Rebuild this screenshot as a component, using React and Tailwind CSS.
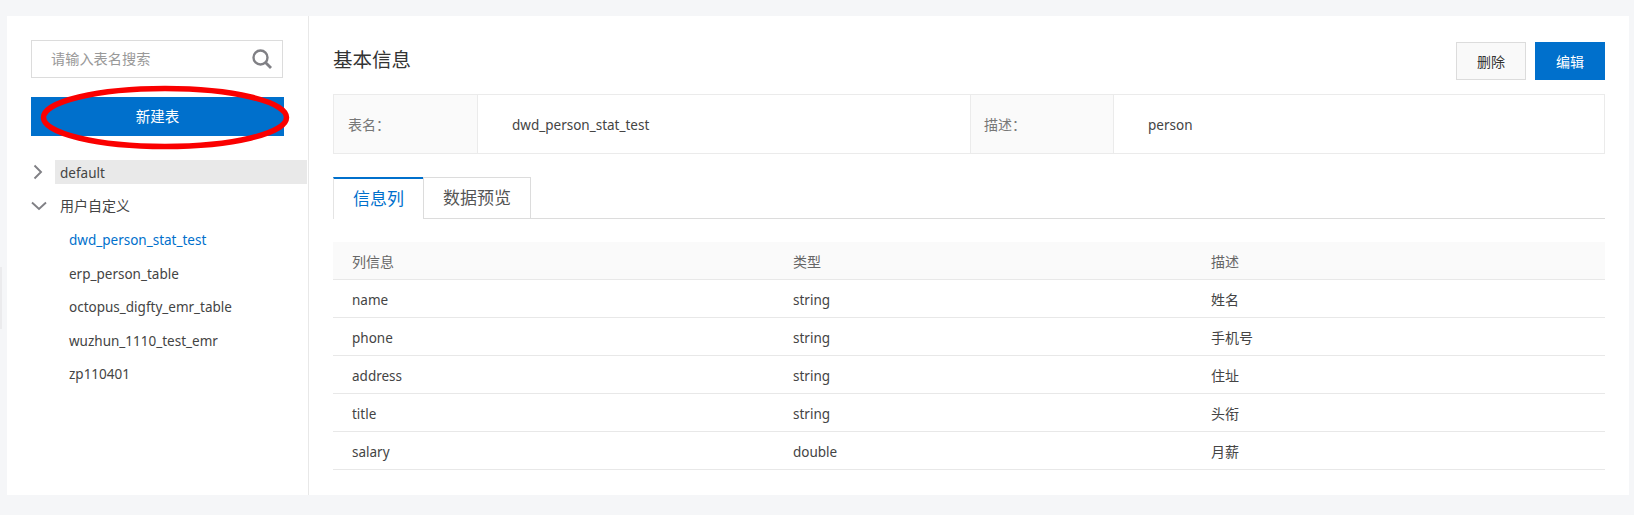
import React from 'react';

const tables = ['dwd_person_stat_test', 'erp_person_table', 'octopus_digfty_emr_table', 'wuzhun_1110_test_emr', 'zp110401'];

const columns = [
  ['name', 'string', '姓名'],
  ['phone', 'string', '手机号'],
  ['address', 'string', '住址'],
  ['title', 'string', '头衔'],
  ['salary', 'double', '月薪'],
];

function Chevron({ open }) {
  return (
    <svg width="16" height="16" viewBox="0 0 16 16" fill="none" stroke="#808085" strokeWidth="1.9" className="shrink-0">
      {open ? <path d="M1 4.5 L8 11 L15 4.5" /> : <path d="M4.5 1.5 L11 8 L4.5 14.5" />}
    </svg>
  );
}

export default function App() {
  return (
    <div className="relative w-[1634px] h-[515px] overflow-hidden bg-[#f5f6f8] pt-4 pl-[7px] pr-[5px] pb-5 font-['Noto_Sans','Noto_Sans_CJK_SC',sans-serif] text-[14px] text-[#444]">
      {/* 左边缘的灰条 */}
      <div className="absolute left-0 top-[267px] w-[2px] h-[62px] bg-[#ebebed]" />

      <div className="flex h-full bg-white">
        {/* 左侧表列表 */}
        <div className="w-[302px] shrink-0 border-r border-[#e8e8e8] pt-6 pl-6">
          <div className="flex items-center justify-between w-[252px] h-[38px] border border-[#dcdcdc] pl-[19px] pr-[10px]">
            <span className="text-[#999] text-[14.2px]">请输入表名搜索</span>
            <svg width="20" height="20" viewBox="0 0 20 20" fill="none" stroke="#808085" strokeWidth="2.4">
              <circle cx="8.5" cy="8.5" r="7" />
              <path d="M13.5 13.5 L19 19" strokeWidth="2.8" />
            </svg>
          </div>

          <div className="relative mt-[19px] w-[253px] h-[39px] bg-[#0070cc] flex items-center justify-center text-white text-[14.5px]">
            新建表
            <svg width="252" height="68" viewBox="0 0 252 68" fill="none" className="absolute left-[9px] top-[-13px]">
              <ellipse cx="125" cy="33.5" rx="121.5" ry="29" stroke="#fa0000" strokeWidth="5.5" />
            </svg>
          </div>

          <div className="mt-[19.5px] pr-px">
            <div className="flex items-center h-[33.5px]">
              <div className="w-[24px] -ml-[1px] mr-[1px]"><Chevron /></div>
              <div className="flex-1 h-6 flex items-center bg-[#e9e9e9] pl-[5px] pt-[2px] text-[13.5px]">default</div>
            </div>
            <div className="flex items-center h-[33.5px]">
              <div className="w-[24px]"><Chevron open /></div>
              <div className="pl-[5px]">用户自定义</div>
            </div>
            {tables.map((t, i) => (
              <div key={t} className={`flex items-center h-[33.5px] pl-[38px] pt-[2px] text-[13.5px] ${i === 0 ? 'text-[#0070cc]' : ''}`}>
                {t}
              </div>
            ))}
          </div>
        </div>

        {/* 右侧详情 */}
        <div className="flex-1 pl-6 pr-[24px] pt-[26px]">
          <div className="flex items-center justify-between h-[38px]">
            <h2 className="text-[19.5px] text-[#333] -mt-[3px]">基本信息</h2>
            <div className="flex gap-[9px]">
              <button className="w-[70px] h-[38px] border border-[#dcdcdc] bg-[#f9f9f9] text-[#333]">删除</button>
              <button className="w-[70px] h-[38px] bg-[#0070cc] text-white">编辑</button>
            </div>
          </div>

          <div className="mt-[14px] grid grid-cols-[144px_492px_144px_1fr] h-[60px] border border-[#ebebeb] items-stretch">
            <div className="flex items-center pl-[14px] pt-px bg-[#fafafa] border-r border-[#ebebeb] text-[#777]">表名：</div>
            <div className="flex items-center pl-[34px] pt-[2px] text-[13.5px]">dwd_person_stat_test</div>
            <div className="flex items-center pl-[13px] pt-px bg-[#fafafa] border-x border-[#ebebeb] text-[#777]">描述：</div>
            <div className="flex items-center pl-[34px] pt-[2px] text-[13.5px]">person</div>
          </div>

          <div className="mt-[23px] flex h-[42px] border-b border-[#dcdcdc] text-[17px]">
            <div className="w-[90px] h-[42px] flex items-center justify-center border-t-2 border-t-[#0070cc] border-l border-l-[#e4e4e4] bg-white text-[#0070cc]">信息列</div>
            <div className="w-[108px] h-[42px] flex items-center justify-center border border-[#dcdcdc] text-[#555]">数据预览</div>
          </div>

          <div className="mt-[23px]">
            <div className="grid grid-cols-[441px_418px_1fr] items-center h-[38px] pl-[19px] pt-px bg-[#fafafa] border-b border-[#e8e8e8] text-[#666]">
              <div>列信息</div>
              <div>类型</div>
              <div>描述</div>
            </div>
            {columns.map((c) => (
              <div key={c[0]} className="grid grid-cols-[441px_418px_1fr] items-center h-[38px] pl-[19px] pt-[2px] border-b border-[#e8e8e8]">
                <div className="text-[13.5px] pt-px">{c[0]}</div>
                <div className="text-[13.5px] pt-px">{c[1]}</div>
                <div>{c[2]}</div>
              </div>
            ))}
          </div>
        </div>
      </div>
    </div>
  );
}
